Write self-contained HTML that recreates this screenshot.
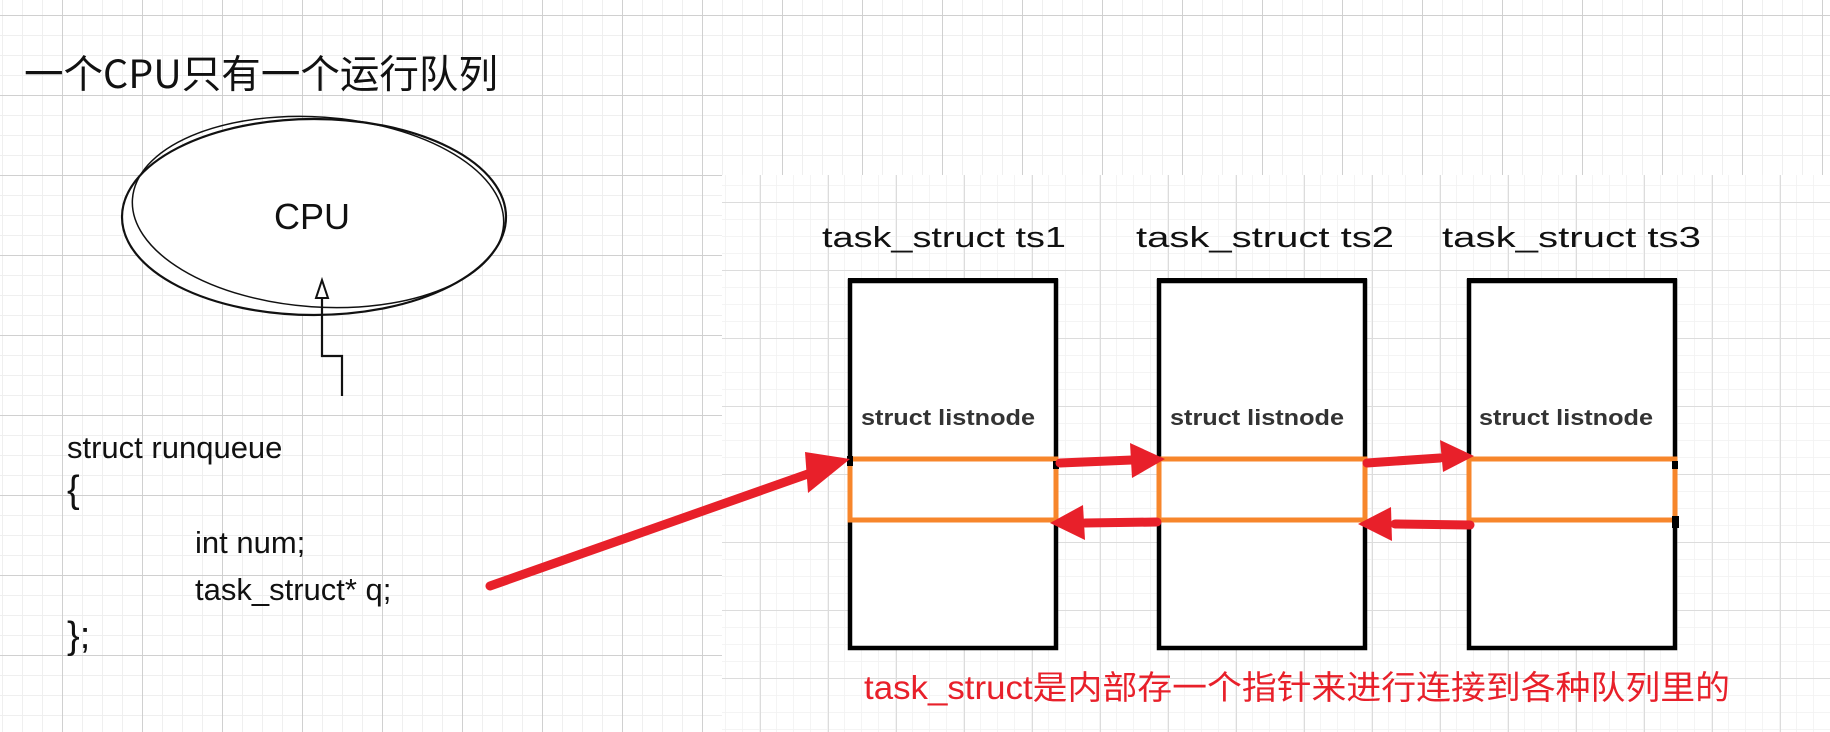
<!DOCTYPE html>
<html><head><meta charset="utf-8"><style>
html,body{margin:0;padding:0;background:#fff;}
svg{display:block}
.hand{font-family:"Liberation Sans","Noto Sans CJK SC",sans-serif;}
</style></head><body>
<svg width="1830" height="732" viewBox="0 0 1830 732" xmlns="http://www.w3.org/2000/svg">
<defs>
<pattern id="gmin" x="2" y="15" width="20" height="20" patternUnits="userSpaceOnUse">
<path d="M0 0H20M0 0V20" stroke="#efefef" stroke-width="2" fill="none"/>
</pattern>
<pattern id="gmaj" x="62" y="95" width="80" height="80" patternUnits="userSpaceOnUse">
<path d="M0 0.5H80M0.5 0V80" stroke="#d0d0d0" stroke-width="1" fill="none"/>
</pattern>
<pattern id="pmin" x="725" y="185" width="17" height="17" patternUnits="userSpaceOnUse">
<path d="M0 0H17M0 0V17" stroke="#f1f1f1" stroke-width="1.5" fill="none"/>
</pattern>
<pattern id="pmaj" x="760" y="202" width="68" height="68" patternUnits="userSpaceOnUse">
<path d="M0 0.5H68M0.5 0V68" stroke="#dcdcdc" stroke-width="1" fill="none"/>
</pattern>
</defs>
<rect width="1830" height="732" fill="#fff"/>
<rect width="1830" height="732" fill="url(#gmin)"/>
<rect width="1830" height="732" fill="url(#gmaj)"/>
<rect x="722" y="175" width="1108" height="557" fill="#fff"/>
<rect x="722" y="175" width="1108" height="557" fill="url(#pmin)"/>
<rect x="722" y="175" width="1108" height="557" fill="url(#pmaj)"/>

<text x="24" y="88" font-size="39" font-family="'Noto Sans CJK SC',sans-serif" font-weight="400" fill="#111" textLength="474" lengthAdjust="spacingAndGlyphs">一个CPU只有一个运行队列</text>

<ellipse cx="314" cy="217" rx="192" ry="98" fill="#fff" stroke="#111" stroke-width="2.2"/>
<ellipse cx="318" cy="212" rx="186" ry="95" transform="rotate(4 318 212)" fill="none" stroke="#111" stroke-width="1.5"/>
<text x="274" y="229" font-size="36" class="hand" fill="#111">CPU</text>
<path d="M342 396 L342 356 L322 356 L322 282" fill="none" stroke="#111" stroke-width="2.2"/>
<path d="M316 298 L322 280 L328 298 Z" fill="#fff" stroke="#111" stroke-width="2"/>

<g class="hand" fill="#111" font-size="31">
<text x="67" y="458">struct runqueue</text>
<text x="67" y="502" font-size="38">{</text>
<text x="195" y="553">int num;</text>
<text x="195" y="600">task_struct* q;</text>
<text x="67" y="648" font-size="38">};</text>
</g>

<g class="hand" fill="#111" font-size="29">
<text x="822" y="247" textLength="244" lengthAdjust="spacingAndGlyphs">task_struct ts1</text>
<text x="1136" y="247" textLength="258" lengthAdjust="spacingAndGlyphs">task_struct ts2</text>
<text x="1442" y="247" textLength="259" lengthAdjust="spacingAndGlyphs">task_struct ts3</text>
</g>

<g fill="#fff" stroke="#000" stroke-width="4.5">
<rect x="850" y="281" width="206" height="367"/>
<rect x="1159" y="281" width="206" height="367"/>
<rect x="1469" y="281" width="206" height="367"/>
</g>
<g stroke="#000" stroke-width="4">
<line x1="848" y1="280" x2="1058" y2="280"/>
<line x1="1157" y1="280" x2="1367" y2="280"/>
<line x1="1467" y1="280" x2="1677" y2="280"/>
</g>
<g font-family="'Liberation Sans',sans-serif" font-weight="bold" font-size="22" fill="#333">
<text x="861" y="425" textLength="174" lengthAdjust="spacingAndGlyphs">struct listnode</text>
<text x="1170" y="425" textLength="174" lengthAdjust="spacingAndGlyphs">struct listnode</text>
<text x="1479" y="425" textLength="174" lengthAdjust="spacingAndGlyphs">struct listnode</text>
</g>
<g fill="none" stroke="#f7862b" stroke-width="5">
<rect x="850" y="459" width="206" height="61"/>
<rect x="1159" y="459" width="206" height="61"/>
<rect x="1469" y="459" width="206" height="61"/>
</g>
<g fill="#000">
<rect x="847" y="456" width="6" height="10"/>
<rect x="1053" y="461" width="6" height="8"/>
<rect x="1672" y="461" width="6" height="8"/>
<rect x="1672" y="516" width="7" height="12"/>
</g>

<g stroke="#e8202a" stroke-width="9" stroke-linecap="round" fill="none">
<line x1="490" y1="586" x2="822" y2="469"/>
<line x1="1060" y1="463" x2="1132" y2="460"/>
<line x1="1367" y1="463" x2="1440" y2="458"/>
<line x1="1157" y1="522" x2="1085" y2="523"/>
<line x1="1470" y1="525" x2="1395" y2="524"/>
</g>
<g fill="#e8202a">
<path d="M850 459 L808 493 L805 452 Z"/>
<path d="M1165 459 L1130 443 L1132 478 Z"/>
<path d="M1474 456 L1440 440 L1443 472 Z"/>
<path d="M1050 523 L1083 505 L1085 540 Z"/>
<path d="M1358 524 L1391 507 L1392 541 Z"/>
</g>

<text x="864" y="699" font-size="33" font-family="'Liberation Sans','Noto Sans CJK SC',sans-serif" fill="#e8202a" textLength="866" lengthAdjust="spacingAndGlyphs">task_struct是内部存一个指针来进行连接到各种队列里的</text>
</svg>
</body></html>
